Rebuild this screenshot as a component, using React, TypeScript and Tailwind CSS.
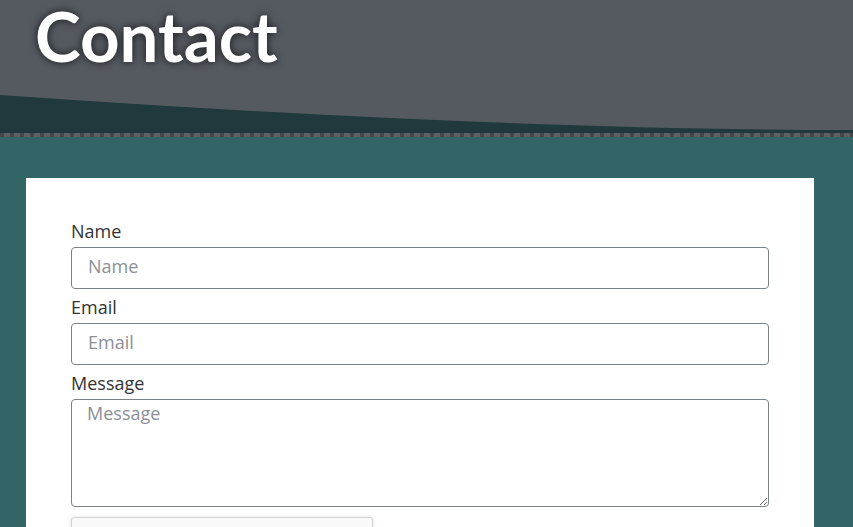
import React from 'react';

const font = { fontFamily: '"Open Sans", "Noto Sans", sans-serif' };

function Field({ label, placeholder }: { label: string; placeholder: string }) {
  return (
    <div className="mb-[6px]">
      <label className="block text-[18px] leading-[24px] text-[#333] mb-[4px]">{label}</label>
      <input
        type="text"
        placeholder={placeholder}
        className="block w-full h-[42px] rounded-[4px] border border-[#7d8288] bg-white px-[16px] pb-[5px] text-[18px] text-[#333] placeholder:text-[#8c9096] outline-none"
      />
    </div>
  );
}

export default function App() {
  return (
    <div className="min-h-screen bg-[#336567]" style={font}>
      <header className="relative h-[133px] bg-[#555a61]">
        <h1
          className="pl-[35px] text-[69px] leading-[72px] font-bold text-white [text-shadow:0_0_8px_rgba(0,0,0,0.75)]"
          style={{ fontFamily: 'Lato, "Open Sans", sans-serif' }}
        >
          Contact
        </h1>
        <svg className="absolute left-0 bottom-0" width="853" height="40" viewBox="0 93 853 40" preserveAspectRatio="none">
          <path d="M0 95 Q 500 130 853 130 L853 133 L0 133 Z" fill="#1f393d" />
        </svg>
      </header>
      <div className="h-[4px] bg-[repeating-linear-gradient(90deg,#43474b_0_4px,#5c6064_4px_10px)]" />

      <main className="pt-[41px]">
        <div className="ml-[26px] w-[788px] bg-white px-[45px] pt-[41px] pb-10">
          <Field label="Name" placeholder="Name" />
          <Field label="Email" placeholder="Email" />
          <div className="mb-[10px]">
            <label className="block text-[18px] leading-[24px] text-[#333] mb-[4px]">Message</label>
            <textarea
              placeholder="Message"
              className="block w-full h-[108px] rounded-[4px] border border-[#7d8288] bg-white px-[15px] pt-[1px] text-[18px] leading-[24px] text-[#333] placeholder:text-[#8c9096] outline-none"
            />
          </div>
          <div className="flex items-center w-[302px] h-[78px] rounded-[3px] border border-[#d3d3d3] bg-[#f9f9f9] shadow-[0_0_4px_1px_rgba(0,0,0,0.08)] px-3 gap-3">
            <div className="w-[28px] h-[28px] rounded-[2px] border-2 border-[#c1c1c1] bg-white" />
            <span className="text-[14px] text-[#000]" style={{ fontFamily: 'Roboto, sans-serif' }}>I'm not a robot</span>
          </div>
          <button className="mt-4 rounded-[4px] bg-[#336567] px-5 py-2 text-white text-[18px]">Send</button>
        </div>
      </main>
    </div>
  );
}
